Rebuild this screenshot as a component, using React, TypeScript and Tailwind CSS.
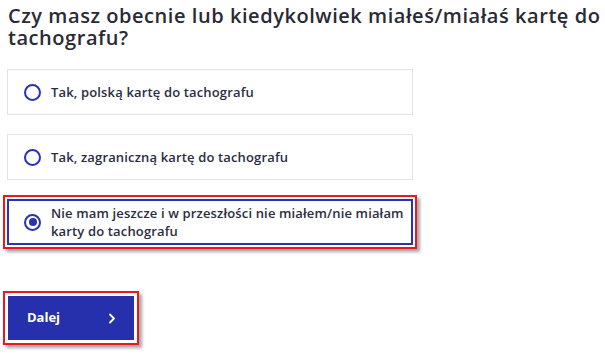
import React, { useState } from "react";

const options = [
  { id: "pl", label: "Tak, polską kartę do tachografu" },
  { id: "foreign", label: "Tak, zagraniczną kartę do tachografu" },
  { id: "none", label: "Nie mam jeszcze i w przeszłości nie miałem/nie miałam karty do tachografu" },
];

function Radio({ checked }: { checked: boolean }) {
  return (
    <span className="flex h-[17px] w-[17px] flex-shrink-0 items-center justify-center rounded-full border-2 border-[#2a33b3]">
      {checked && <span className="h-[8px] w-[8px] rounded-full bg-[#2a33b3]" />}
    </span>
  );
}

export default function App() {
  const [selected, setSelected] = useState("none");

  return (
    <div className="min-h-screen bg-white pl-[7px] pt-[5px] text-[#2b2c3b]" style={{ fontFamily: '"Open Sans", sans-serif' }}>
      <h1 className="pl-[1px] text-[20px] font-semibold leading-[22px] tracking-[0.55px] text-[#2a2a35]">
        Czy masz obecnie lub kiedykolwiek miałeś/miałaś kartę do tachografu?
      </h1>

      <div className="mt-[20px] flex w-[406px] flex-col gap-[19px]">
        {options.map((opt) => {
          const isSelected = selected === opt.id;
          const box = (
            <button
              onClick={() => setSelected(opt.id)}
              className={
                isSelected
                  ? "flex min-h-[46px] w-full items-center gap-[10px] border-2 border-[#2a33b3] bg-white py-[3px] pl-[15px] pr-[4px] text-left"
                  : "flex h-[46px] w-full items-center gap-[10px] border border-[#e3e3e3] bg-white px-[16px] text-left"
              }
            >
              <Radio checked={isSelected} />
              <span className="text-[13px] font-semibold leading-[18px] tracking-[0.15px] text-[#2b2d42]">{opt.label}</span>
            </button>
          );
          if (!isSelected) return <div key={opt.id}>{box}</div>;
          return (
            <div
              key={opt.id}
              className="-mx-[4px] -my-[4px] border-2 border-[#ee1620] p-[2px] shadow-[3px_3px_3px_rgba(0,0,0,0.35)]"
            >
              {box}
            </div>
          );
        })}
      </div>

      <div className="mt-[46px] -ml-[4px] inline-block border-2 border-[#ee1620] p-[3px] shadow-[3px_3px_3px_rgba(0,0,0,0.35)]">
        <button className="flex h-[44px] w-[126px] items-center justify-between bg-[#2630ad] pl-[19px] pr-[18px] text-[13px] font-bold text-white">
          <span>Dalej</span>
          <svg width="8" height="11" viewBox="0 0 8 11" fill="none">
            <path d="M2 1.5L6 5.5L2 9.5" stroke="white" strokeWidth="1.8" strokeLinecap="round" strokeLinejoin="round" />
          </svg>
        </button>
      </div>
    </div>
  );
}
